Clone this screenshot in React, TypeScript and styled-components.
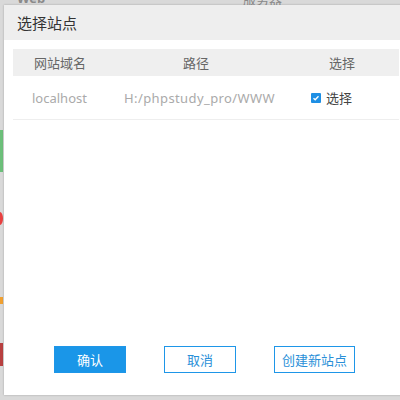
import styled, { createGlobalStyle } from 'styled-components'

const GlobalStyle = createGlobalStyle`
  html, body {
    margin: 0;
    padding: 0;
    width: 400px;
    height: 400px;
    overflow: hidden;
    font-family: "Noto Sans", "Noto Sans CJK SC", sans-serif;
  }
`

const Backdrop = styled.div`
  position: relative;
  width: 400px;
  height: 400px;
  background: #d9d9d9;
  overflow: hidden;
`

const BackTab = styled.div<{ left: number; bold?: boolean }>`
  position: absolute;
  top: -11px;
  left: ${(p) => p.left}px;
  font-size: 13px;
  color: #8a8a8a;
  font-weight: ${(p) => (p.bold ? 700 : 400)};
`

const SideMark = styled.div<{ top: number; height: number; color: string; round?: boolean }>`
  position: absolute;
  left: 0;
  top: ${(p) => p.top}px;
  width: ${(p) => (p.round ? 6 : 3)}px;
  height: ${(p) => p.height}px;
  margin-left: ${(p) => (p.round ? -3 : 0)}px;
  border-radius: ${(p) => (p.round ? '50%' : '0')};
  background: ${(p) => p.color};
`

const Dialog = styled.div`
  position: absolute;
  left: 4px;
  top: 5px;
  width: 410px;
  height: 390px;
  background: #fff;
  display: flex;
  flex-direction: column;
  box-shadow: 0 0 2px rgba(0, 0, 0, 0.25);
`

const Header = styled.div`
  height: 35px;
  flex: none;
  display: flex;
  align-items: center;
  padding-left: 13px;
  background: #eeeeee;
  font-size: 15px;
  color: #333;
`

const Body = styled.div`
  flex: 1;
  padding: 9px 0 0 9px;
`

const Table = styled.div`
  width: 386px;
`

const HeadRow = styled.div`
  display: grid;
  grid-template-columns: 94px 178px 114px;
  height: 27px;
  align-items: center;
  background: #efefef;
  font-size: 13px;
  color: #666;
`

const Row = styled.div`
  display: grid;
  grid-template-columns: 94px 178px 114px;
  height: 43px;
  align-items: center;
  border-bottom: 1px solid #eeeeee;
  font-size: 13px;
  color: #aaaaaa;
`

const Cell = styled.div`
  text-align: center;
  white-space: nowrap;
`

const ValueCell = styled.div<{ indent: number; spread?: number }>`
  padding-left: ${(p) => p.indent}px;
  letter-spacing: ${(p) => p.spread ?? 0}px;
  white-space: nowrap;
`

const CheckCell = styled.label`
  display: flex;
  align-items: center;
  gap: 5px;
  padding-left: 26px;
  color: #444;
  font-size: 13px;
`

const CheckBox = styled.span`
  width: 10px;
  height: 10px;
  background: #1e8fe4;
  border-radius: 1px;
  display: flex;
  align-items: center;
  justify-content: center;
`

const Footer = styled.div`
  display: flex;
  gap: 38px;
  padding: 0 0 22px 50px;
`

const Button = styled.button<{ primary?: boolean; width: number }>`
  width: ${(p) => p.width}px;
  height: 27px;
  font-family: "Noto Sans CJK SC", sans-serif;
  font-size: 13px;
  border: 1px solid #1e96e8;
  background: ${(p) => (p.primary ? '#1a96e8' : '#fff')};
  color: ${(p) => (p.primary ? '#fff' : '#2a8fd8')};
  padding: 0;
  cursor: pointer;
`

export default function App() {
  return (
    <Backdrop>
      <GlobalStyle />
      <BackTab left={17} bold>Web</BackTab>
      <BackTab left={243}>服务器</BackTab>
      <SideMark top={130} height={42} color="#6cbf7a" />
      <SideMark top={212} height={13} color="#e84040" round />
      <SideMark top={297} height={7} color="#f0a030" />
      <SideMark top={343} height={23} color="#b84040" />
      <Dialog>
        <Header>选择站点</Header>
        <Body>
          <Table>
            <HeadRow>
              <Cell>网站域名</Cell>
              <Cell>路径</Cell>
              <Cell>选择</Cell>
            </HeadRow>
            <Row>
              <ValueCell indent={19}>localhost</ValueCell>
              <ValueCell indent={17} spread={0.4}>H:/phpstudy_pro/WWW</ValueCell>
              <CheckCell>
                <CheckBox>
                  <svg width="8" height="8" viewBox="0 0 8 8">
                    <path d="M1.5 4.2 L3.2 5.8 L6.5 2.2" stroke="#fff" strokeWidth="1.3" fill="none" />
                  </svg>
                </CheckBox>
                选择
              </CheckCell>
            </Row>
          </Table>
        </Body>
        <Footer>
          <Button primary width={72}>确认</Button>
          <Button width={72}>取消</Button>
          <Button width={81}>创建新站点</Button>
        </Footer>
      </Dialog>
    </Backdrop>
  )
}
